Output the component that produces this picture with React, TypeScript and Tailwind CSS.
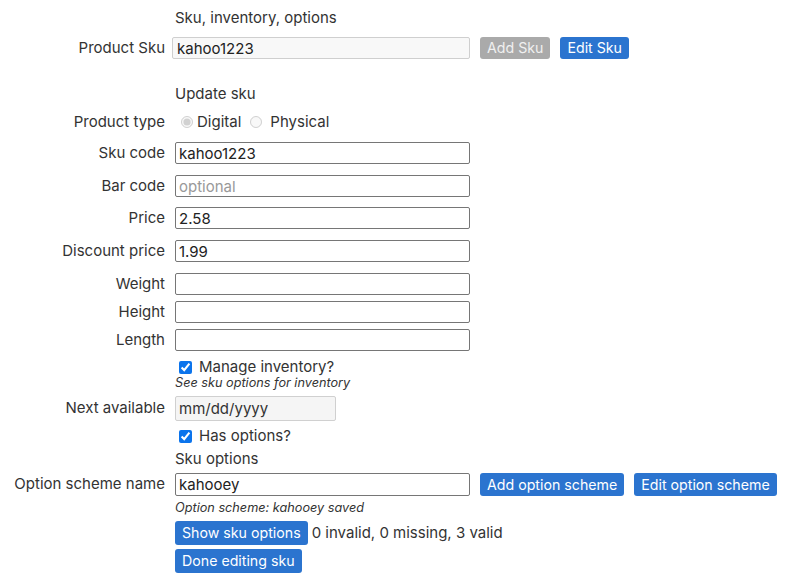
const font = { fontFamily: "Inter, 'Noto Sans', sans-serif" };

function Label({ children }: { children?: React.ReactNode }) {
    return <div className="w-[175px] shrink-0 text-right pr-[10px] text-[#333]">{children}</div>;
}

function TextBox({ value, placeholder, w = "w-[295px]" }: { value?: string; placeholder?: string; w?: string }) {
    return (
        <input
            readOnly
            value={value ?? ""}
            placeholder={placeholder}
            className={`${w} h-full border border-[#767676] rounded-[2px] px-[3px] text-[15px] text-[#222] placeholder:text-[#999] outline-none bg-white`}
        />
    );
}

function Btn({ children, gray }: { children: React.ReactNode; gray?: boolean }) {
    return (
        <button
            className={`h-full px-[7px] rounded-[3px] text-[14.2px] ${gray ? "bg-[#aaaaaa] text-[#f0f0f0]" : "bg-[#2b74cf] text-white"}`}
        >
            {children}
        </button>
    );
}

export default function App() {
    return (
        <div className="w-[795px] h-[585px] bg-white text-[15px] text-[#333] pt-[8px]" style={font}>
            {/* 제목 */}
            <div className="flex items-center h-[20px]">
                <Label />
                <div>Sku, inventory, options</div>
            </div>

            {/* product sku */}
            <div className="flex items-center h-[22px] mt-[9px]">
                <Label>Product Sku</Label>
                <input
                    readOnly
                    value="kahoo1223"
                    className="-ml-[3px] w-[298px] h-full border border-[#cfcfcf] rounded-[2px] px-[4px] text-[15px] text-[#222] bg-[#f8f8f8] outline-none"
                />
                <div className="ml-[10px] h-full flex gap-[10px]">
                    <Btn gray>Add Sku</Btn>
                    <Btn>Edit Sku</Btn>
                </div>
            </div>

            <div className="flex items-center h-[20px] mt-[25px]">
                <Label />
                <div>Update sku</div>
            </div>

            <div className="flex items-center h-[20px] mt-[8px]">
                <Label>Product type</Label>
                <label className="flex items-center">
                    <input type="radio" disabled defaultChecked name="pt" className="ml-[6px] mr-[4px] w-[12px] h-[12px]" />
                    Digital
                </label>
                <label className="flex items-center ml-[9px]">
                    <input type="radio" disabled name="pt" className="mr-[8px] w-[12px] h-[12px]" />
                    Physical
                </label>
            </div>

            <div className="flex items-center h-[22px] mt-[10px]">
                <Label>Sku code</Label>
                <TextBox value="kahoo1223" />
            </div>
            <div className="flex items-center h-[22px] mt-[11px]">
                <Label>Bar code</Label>
                <TextBox placeholder="optional" />
            </div>
            <div className="flex items-center h-[22px] mt-[10px]">
                <Label>Price</Label>
                <TextBox value="2.58" />
            </div>
            <div className="flex items-center h-[22px] mt-[11px]">
                <Label>Discount price</Label>
                <TextBox value="1.99" />
            </div>
            <div className="flex items-center h-[22px] mt-[11px]">
                <Label>Weight</Label>
                <TextBox />
            </div>
            <div className="flex items-center h-[22px] mt-[6px]">
                <Label>Height</Label>
                <TextBox />
            </div>
            <div className="flex items-center h-[22px] mt-[6px]">
                <Label>Length</Label>
                <TextBox />
            </div>

            {/* inventory */}
            <div className="flex items-center h-[18px] mt-[7px]">
                <Label />
                <input type="checkbox" defaultChecked className="ml-[4px] w-[13px] h-[13px] accent-[#0b74ec]" />
                <span className="ml-[7px]">Manage inventory?</span>
            </div>
            <div className="flex items-center h-[14px]">
                <Label />
                <i className="text-[12.7px]">See sku options for inventory</i>
            </div>

            <div className="flex items-center h-[25px] mt-[6px]">
                <Label>Next available</Label>
                <input
                    readOnly
                    value="mm/dd/yyyy"
                    className="w-[161px] h-full border border-[#d0d0d0] rounded-[2px] px-[3px] text-[15px] text-[#333] bg-[#f5f5f5] outline-none"
                />
            </div>

            <div className="flex items-center h-[18px] mt-[6px]">
                <Label />
                <input type="checkbox" defaultChecked className="ml-[4px] w-[13px] h-[13px] accent-[#0b74ec]" />
                <span className="ml-[7px]">Has options?</span>
            </div>

            <div className="flex items-center h-[20px] mt-[4px]">
                <Label />
                <div>Sku options</div>
            </div>

            <div className="flex items-center h-[23px] mt-[4px]">
                <Label>Option scheme name</Label>
                <TextBox value="kahooey" />
                <div className="ml-[10px] h-full flex gap-[10px]">
                    <Btn>Add option scheme</Btn>
                    <Btn>Edit option scheme</Btn>
                </div>
            </div>
            <div className="flex items-center h-[14px] mt-[5px]">
                <Label />
                <i className="text-[12.7px]">Option scheme: kahooey saved</i>
            </div>

            <div className="flex items-center h-[24px] mt-[6px]">
                <Label />
                <Btn>Show sku options</Btn>
                <span className="ml-[4px]">0 invalid, 0 missing, 3 valid</span>
            </div>
            <div className="flex items-center h-[24px] mt-[4px]">
                <Label />
                <Btn>Done editing sku</Btn>
            </div>
        </div>
    );
}
